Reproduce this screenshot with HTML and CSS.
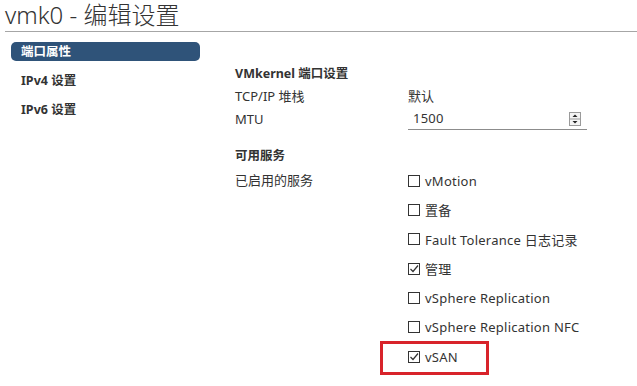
FILE: index.html
```html
<!DOCTYPE html>
<html lang="zh-CN">
<head>
    <meta charset="UTF-8">
    <title>vmk0 - 编辑设置</title>
    <link rel="stylesheet" href="styles.css">
</head>
<body>
    <div class="dialog-title">
        <h1>vmk0 - 编辑设置</h1>
    </div>

    <div class="dialog-body">
        <ul class="side-nav">
            <li class="active">端口属性</li>
            <li>IPv4 设置</li>
            <li>IPv6 设置</li>
        </ul>

        <div class="form">
            <div class="section-title">VMkernel 端口设置</div>
            <div class="row">
                <div class="label">TCP/IP 堆栈</div>
                <div class="value">默认</div>
            </div>
            <div class="row">
                <div class="label">MTU</div>
                <div class="value">
                    <div class="number-input">
                        <span>1500</span>
                        <span class="spinner">
                            <svg width="12" height="14" viewBox="0 0 12 14">
                                <rect x="0.5" y="0.5" width="11" height="13" fill="#f4f4f4" stroke="#9a9a9a"/>
                                <line x1="1" y1="7" x2="11" y2="7" stroke="#9a9a9a"/>
                                <polygon points="3.5,5 8.5,5 6,2.5" fill="#222"/>
                                <polygon points="3.5,9 8.5,9 6,11.5" fill="#222"/>
                            </svg>
                        </span>
                    </div>
                </div>
            </div>

            <div class="section-title services-title">可用服务</div>
            <div class="services">
                <div class="label">已启用的服务</div>
                <div class="checks">
                    <label class="check"><span class="box"></span>vMotion</label>
                    <label class="check"><span class="box"></span>置备</label>
                    <label class="check"><span class="box"></span>Fault Tolerance 日志记录</label>
                    <label class="check"><span class="box checked"><svg width="10" height="10" viewBox="0 0 10 10"><polyline points="1.5,5 4,7.5 9,1.5" fill="none" stroke="#333" stroke-width="1.2"/></svg></span>管理</label>
                    <label class="check"><span class="box"></span>vSphere Replication</label>
                    <label class="check"><span class="box"></span>vSphere Replication NFC</label>
                    <label class="check marked"><span class="box checked"><svg width="10" height="10" viewBox="0 0 10 10"><polyline points="1.5,5 4,7.5 9,1.5" fill="none" stroke="#333" stroke-width="1.2"/></svg></span>vSAN<span class="highlight"></span></label>
                </div>
            </div>
        </div>
    </div>
</body>
</html>
```

FILE: styles.css
```css
body {
    margin: 0;
    background: #fff;
    color: #333;
    font-family: "Noto Sans", "Noto Sans CJK SC", sans-serif;
    font-size: 13px;
    width: 637px;
    height: 386px;
    overflow: hidden;
}
.dialog-title {
    margin-left: 5px;
    height: 31px;
    border-bottom: 1px solid #a6a6a6;
}
.dialog-title h1 {
    margin: 0;
    font-size: 24px;
    font-weight: 300;
    line-height: 29px;
    color: #333;
}
.dialog-body {
    display: flex;
}
.side-nav {
    list-style: none;
    margin: 10px 0 0 11px;
    padding: 0;
    width: 189px;
}
.side-nav li {
    height: 19px;
    line-height: 19px;
    padding-left: 10px;
    margin-bottom: 10px;
    font-weight: 700;
    font-size: 12.5px;
    color: #333;
}
.side-nav li.active {
    background-color: #2f5379;
    color: #fff;
    border-radius: 5px;
}
.form {
    margin-left: 35px;
    padding-top: 30px;
    flex: 1;
}
.section-title {
    height: 23px;
    line-height: 23px;
    font-weight: 700;
    font-size: 12.5px;
}
.row {
    display: flex;
    height: 23px;
    line-height: 23px;
}
.label {
    width: 173px;
}
.number-input {
    width: 179px;
    height: 22px;
    border-bottom: 1px solid #8c8c8c;
    display: flex;
    justify-content: space-between;
    align-items: center;
    padding-left: 5px;
    box-sizing: border-box;
    letter-spacing: 0.2px;
}
.spinner {
    display: flex;
    margin-right: 6px;
}
.services-title {
    margin-top: 14px;
    height: 21px;
    line-height: 21px;
}
.services {
    display: flex;
}
.services .label {
    line-height: 29.33px;
}
.check {
    position: relative;
    display: flex;
    align-items: center;
    height: 29.33px;
    letter-spacing: 0.25px;
}
.box {
    width: 12px;
    height: 12px;
    border: 1px solid #333;
    box-sizing: border-box;
    margin-right: 5px;
    display: flex;
    align-items: center;
    justify-content: center;
    background: #fff;
}
.highlight {
    position: absolute;
    left: -28px;
    top: -1px;
    width: 109px;
    height: 34px;
    border: 3px solid #d8232a;
    box-sizing: border-box;
}
```
